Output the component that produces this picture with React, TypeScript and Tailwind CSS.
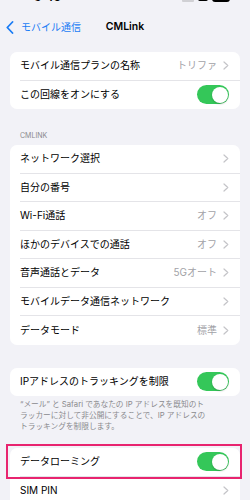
const FONT = 'font-["Inter","Noto_Sans_CJK_JP",sans-serif]';

function Chevron() {
  return (
    <svg width="6" height="9" viewBox="0 0 6 9" className="shrink-0">
      <polyline points="1,1 4.8,4.5 1,8" fill="none" stroke="#c4c4c8" strokeWidth="1.2" strokeLinecap="round" strokeLinejoin="round" />
    </svg>
  );
}

function Toggle() {
  return (
    <div className="w-[32px] h-[19px] rounded-full bg-[#34c759] flex items-center justify-end px-[1.5px]">
      <div className="w-[16px] h-[16px] rounded-full bg-white shadow-[0_1px_2px_rgba(0,0,0,0.2)]" />
    </div>
  );
}

function Row({ label, value, toggle, last }: { label: string; value?: string; toggle?: boolean; last?: boolean }) {
  return (
    <div className="pl-[10px] h-[28.5px] flex">
      <div className={`flex-1 flex items-center pr-[11px] ${last ? '' : 'border-b border-[#e4e4e8]'}`}>
        <span className="flex-1 text-[10px] text-black whitespace-nowrap">{label}</span>
        {toggle ? (
          <Toggle />
        ) : (
          <div className="flex items-center gap-[6px]">
            {value && <span className="text-[10px] text-[#a2a2a7]">{value}</span>}
            <Chevron />
          </div>
        )}
      </div>
    </div>
  );
}

export default function App() {
  return (
    <div className={`w-[250px] h-[500px] overflow-hidden bg-[#f2f2f7] ${FONT}`}>
      {/* status bar, mostly cut off */}
      <div className="h-[4px] overflow-hidden">
        <div className="-mt-[10px] flex items-center justify-between px-[34px] h-[14px]">
          <span className="text-[12px] font-semibold text-black">9:45</span>
          <div className="flex items-center gap-[4px] mr-[-14px]">
            <div className="w-[12px] h-[10px] bg-[#d0d0d4] rounded-[1px]" />
            <div className="w-[10px] h-[8px] bg-black rounded-[2px]" />
            <div className="w-[18px] h-[10px] bg-black rounded-[3px]" />
          </div>
        </div>
      </div>

      {/* nav */}
      <div className="h-[46px] flex items-center relative">
        <div className="flex items-center pl-[6px] gap-[7px]">
          <svg width="8" height="13" viewBox="0 0 8 13">
            <polyline points="6.5,1 1.3,6.5 6.5,12" fill="none" stroke="#1a7cf5" strokeWidth="1.8" strokeLinecap="round" strokeLinejoin="round" />
          </svg>
          <span className="text-[10px] text-[#1a7cf5]">モバイル通信</span>
        </div>
        <div className="flex-1" />
        <span className="absolute left-0 right-0 text-center text-[10.5px] font-semibold text-black pointer-events-none">CMLink</span>
      </div>

      <div className="mt-[2px] mx-[10px] bg-white rounded-[7px] overflow-hidden">
        <Row label="モバイル通信プランの名称" value="トリファ" />
        <Row label="この回線をオンにする" toggle last />
      </div>

      <div className="pt-[22px] pb-[5px] px-[20px] text-[7px] leading-[9px] text-[#8a8a8e]">CMLINK</div>

      <div className="mx-[10px] bg-white rounded-[7px] overflow-hidden">
        <Row label="ネットワーク選択" />
        <Row label="自分の番号" />
        <Row label="Wi-Fi通話" value="オフ" />
        <Row label="ほかのデバイスでの通話" value="オフ" />
        <Row label="音声通話とデータ" value="5Gオート" />
        <Row label="モバイルデータ通信ネットワーク" />
        <Row label="データモード" value="標準" last />
      </div>

      <div className="mt-[23px] mx-[10px] bg-white rounded-[7px] overflow-hidden">
        <Row label="IPアドレスのトラッキングを制限" toggle last />
      </div>

      <div className="pt-[2.5px] px-[20px] text-[7.7px] leading-[11px] text-[#8a8a8e] whitespace-nowrap">
        <div>“メール” と Safari であなたの IP アドレスを既知のト</div>
        <div>ラッカーに対して非公開にすることで、IP アドレスの</div>
        <div>トラッキングを制限します。</div>
      </div>

      <div className="mt-[16.5px] mx-[10px] bg-white rounded-t-[7px] relative">
        <div className="relative">
          <Row label="データローミング" toggle />
          <div className="absolute left-[-4px] right-[-2px] top-[-4px] bottom-[-2px] border-2 border-[#e8246f] pointer-events-none" />
        </div>
        <Row label="SIM PIN" last />
      </div>
    </div>
  );
}
